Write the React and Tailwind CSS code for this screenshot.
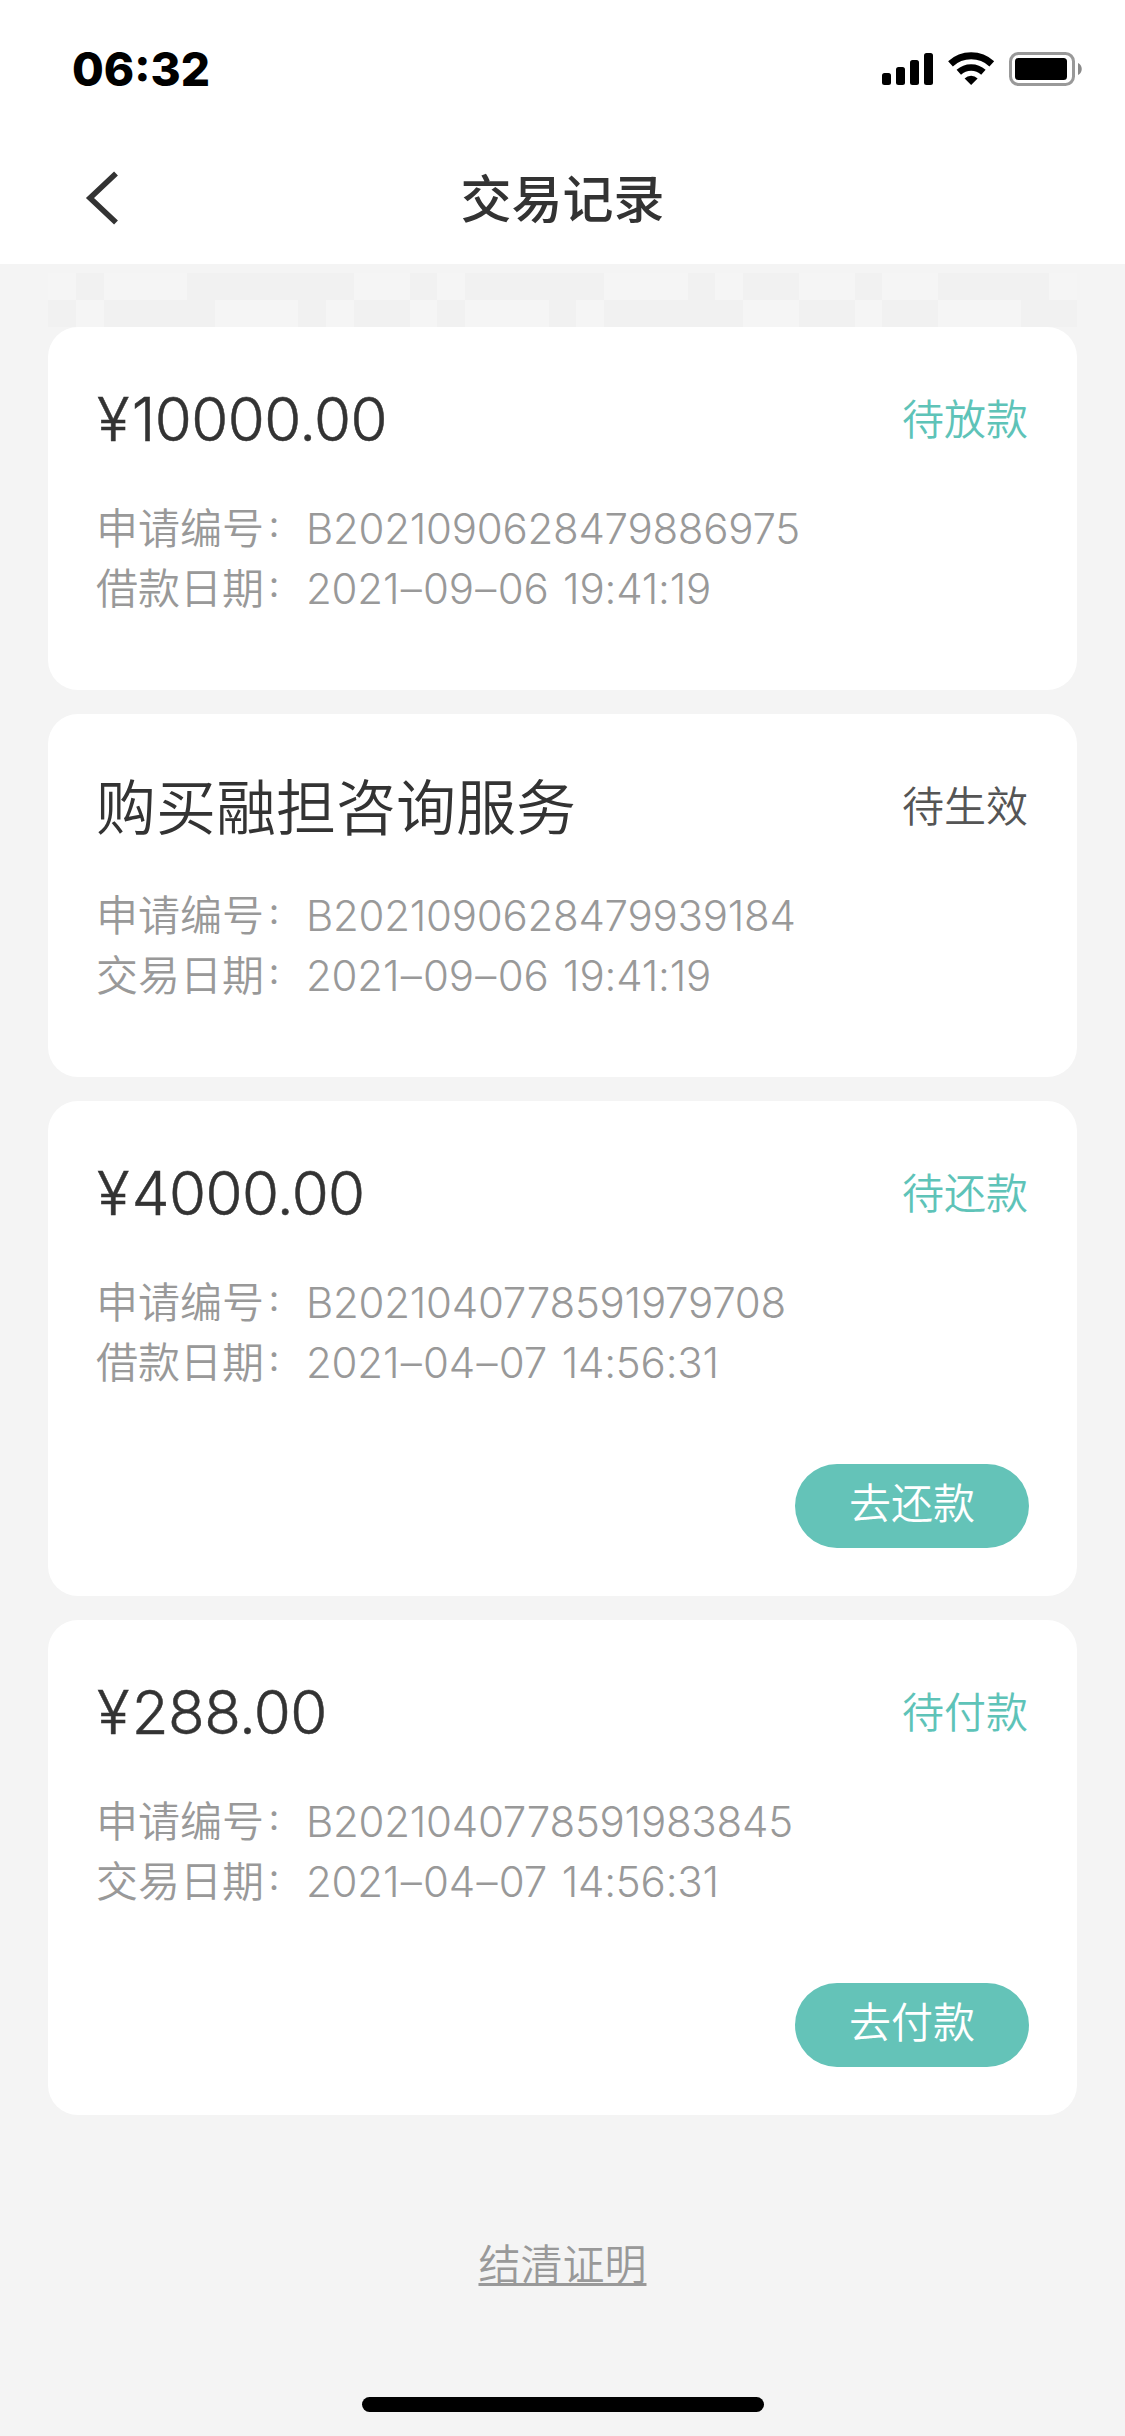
const MOSAIC_ROWS = [
  [1, 5, 6, 7, 8, 9, 10, 13, 15, 16, 17, 18, 19, 23, 25, 26, 29, 32, 33, 34, 35],
  [0, 2, 3, 4, 5, 9, 11, 12, 14, 18, 20, 21, 22, 23, 24, 27, 28, 30, 31, 35, 36],
];

const RECORDS = [
  { amount: "10000.00", status: "待放款", no: "B2021090628479886975", dateLabel: "借款日期", date: "2021–09–06 19:41:19" },
  { title: "购买融担咨询服务", status: "待生效", muted: true, no: "B2021090628479939184", dateLabel: "交易日期", date: "2021–09–06 19:41:19" },
  { amount: "4000.00", status: "待还款", no: "B2021040778591979708", dateLabel: "借款日期", date: "2021–04–07 14:56:31", action: "去还款" },
  { amount: "288.00", status: "待付款", no: "B2021040778591983845", dateLabel: "交易日期", date: "2021–04–07 14:56:31", action: "去付款" },
];

function StatusBar() {
  return (
    <div className="flex h-[132px] items-start justify-between pl-[72px] pr-[42px] pt-[51px]">
      <span className="h-9 text-[46px] font-extrabold leading-9 text-black">06:32</span>
      <svg className="h-9 w-[202px]" viewBox="881 51 202 36">
        <rect x="882" y="73" width="9" height="12" rx="2.5" />
        <rect x="896" y="67" width="9" height="18" rx="2.5" />
        <rect x="910" y="60" width="9" height="25" rx="2.5" />
        <rect x="924" y="53" width="9" height="32" rx="2.5" />
        <g fill="none" stroke="#000">
          <path d="M950.5 63.8A30.5 30.5 0 0 1 991.8 63.8" strokeWidth="7" />
          <path d="M958.8 72.3A18.3 18.3 0 0 1 983.4 72.3" strokeWidth="6.6" />
        </g>
        <path d="M971.1 85L964.6 78.4A9.4 9.4 0 0 1 977.6 78.4Z" />
        <rect x="1010.5" y="53.5" width="63" height="31" rx="8" fill="none" stroke="#999" strokeWidth="3" />
        <rect x="1015" y="58" width="52" height="22" rx="3.5" />
        <path d="M1078 63C1083 65 1083 73 1078 75Z" fill="#8a8a8a" />
      </svg>
    </div>
  );
}

function NavBar() {
  return (
    <div className="grid h-[132px] grid-cols-[1fr_auto_1fr] items-center">
      <svg className="ml-[85px] h-14 w-9" viewBox="0 0 36 56" fill="none" stroke="#333" strokeWidth="5.6">
        <path d="M31 3.5L5 28L31 52.5" />
      </svg>
      <h1 className="pt-1 text-[51px] font-medium leading-[72px] text-[#333]">交易记录</h1>
    </div>
  );
}

function Mosaic() {
  return (
    <div className="mx-12 mt-[9px]">
      {MOSAIC_ROWS.map((cells, row) => (
        <div key={row} className="grid h-[27px] grid-cols-[repeat(37,minmax(0,1fr))]">
          {Array.from({ length: 37 }, (_, i) => (
            <div key={i} className={cells.includes(i) ? "bg-[#f1f1f1]" : "bg-[#f5f5f5]"} />
          ))}
        </div>
      ))}
    </div>
  );
}

function Label({ children }) {
  return (
    <dt className="whitespace-nowrap">
      {children}
      <span className="ml-[3px] align-[7px] text-[28px] font-medium leading-none">：</span>
    </dt>
  );
}

function DateText({ value }) {
  return value.split(/(–)/).map((part, i) =>
    part === "–" ? (
      <span key={i} className="mx-[1.5px]">–</span>
    ) : (
      part
    )
  );
}

function RecordCard({ amount, title, status, muted, no, dateLabel, date, action }) {
  return (
    <section className={`flex flex-col rounded-[30px] bg-white px-12 pt-12 ${action ? "h-[495px]" : "h-[363px]"}`}>
      <div className="flex h-[90px] items-center justify-between">
        {amount ? (
          <h2 className="ml-px pb-0.5 text-[60px] font-[350] leading-[90px] tracking-[-0.6px] text-[#333] [-webkit-text-stroke:0.5px_#333]">
            <span className="mr-[3px]">¥</span>
            {amount}
          </h2>
        ) : (
          <h2 className="pt-0.5 text-[60px] font-[350] leading-[90px] text-[#333]">{title}</h2>
        )}
        <span className={`mr-px text-[42px] font-[350] leading-[60px] ${muted ? "text-[#555]" : "text-[#5ec3b8]"}`}>{status}</span>
      </div>
      <dl className="mt-[34px] grid grid-cols-[210px_auto] grid-rows-[60px_60px] justify-start text-[42px] font-[350] leading-[60px] text-[#999]">
        <Label>申请编号</Label>
        <dd className="whitespace-nowrap tracking-[-0.25px]">{no}</dd>
        <Label>{dateLabel}</Label>
        <dd className="whitespace-nowrap tracking-[-0.2px] [font-feature-settings:'calt'_0] [word-spacing:3px]">
          <DateText value={date} />
        </dd>
      </dl>
      {action && (
        <button className="mt-[71px] flex h-[84px] w-[234px] justify-center self-end rounded-full bg-[#64c3b8] text-[42px] font-[350] leading-[80px] text-white">
          {action}
        </button>
      )}
    </section>
  );
}

export default function App() {
  return (
    <div className="flex h-[2436px] w-[1125px] flex-col overflow-hidden bg-[#f4f4f4] font-['Inter','Noto_Sans_CJK_SC',sans-serif]">
      <header className="bg-white">
        <StatusBar />
        <NavBar />
      </header>
      <Mosaic />
      <main className="mx-12 flex flex-col gap-6">
        {RECORDS.map((r) => (
          <RecordCard key={r.no} {...r} />
        ))}
      </main>
      <a className="mt-[120px] self-center text-[42px] font-[350] leading-[60px] text-[#999] underline decoration-[3px] underline-offset-[3px] [text-decoration-skip-ink:none]">
        结清证明
      </a>
      <div className="mb-6 mt-auto h-[15px] w-[402px] self-center rounded-full bg-black" />
    </div>
  );
}
